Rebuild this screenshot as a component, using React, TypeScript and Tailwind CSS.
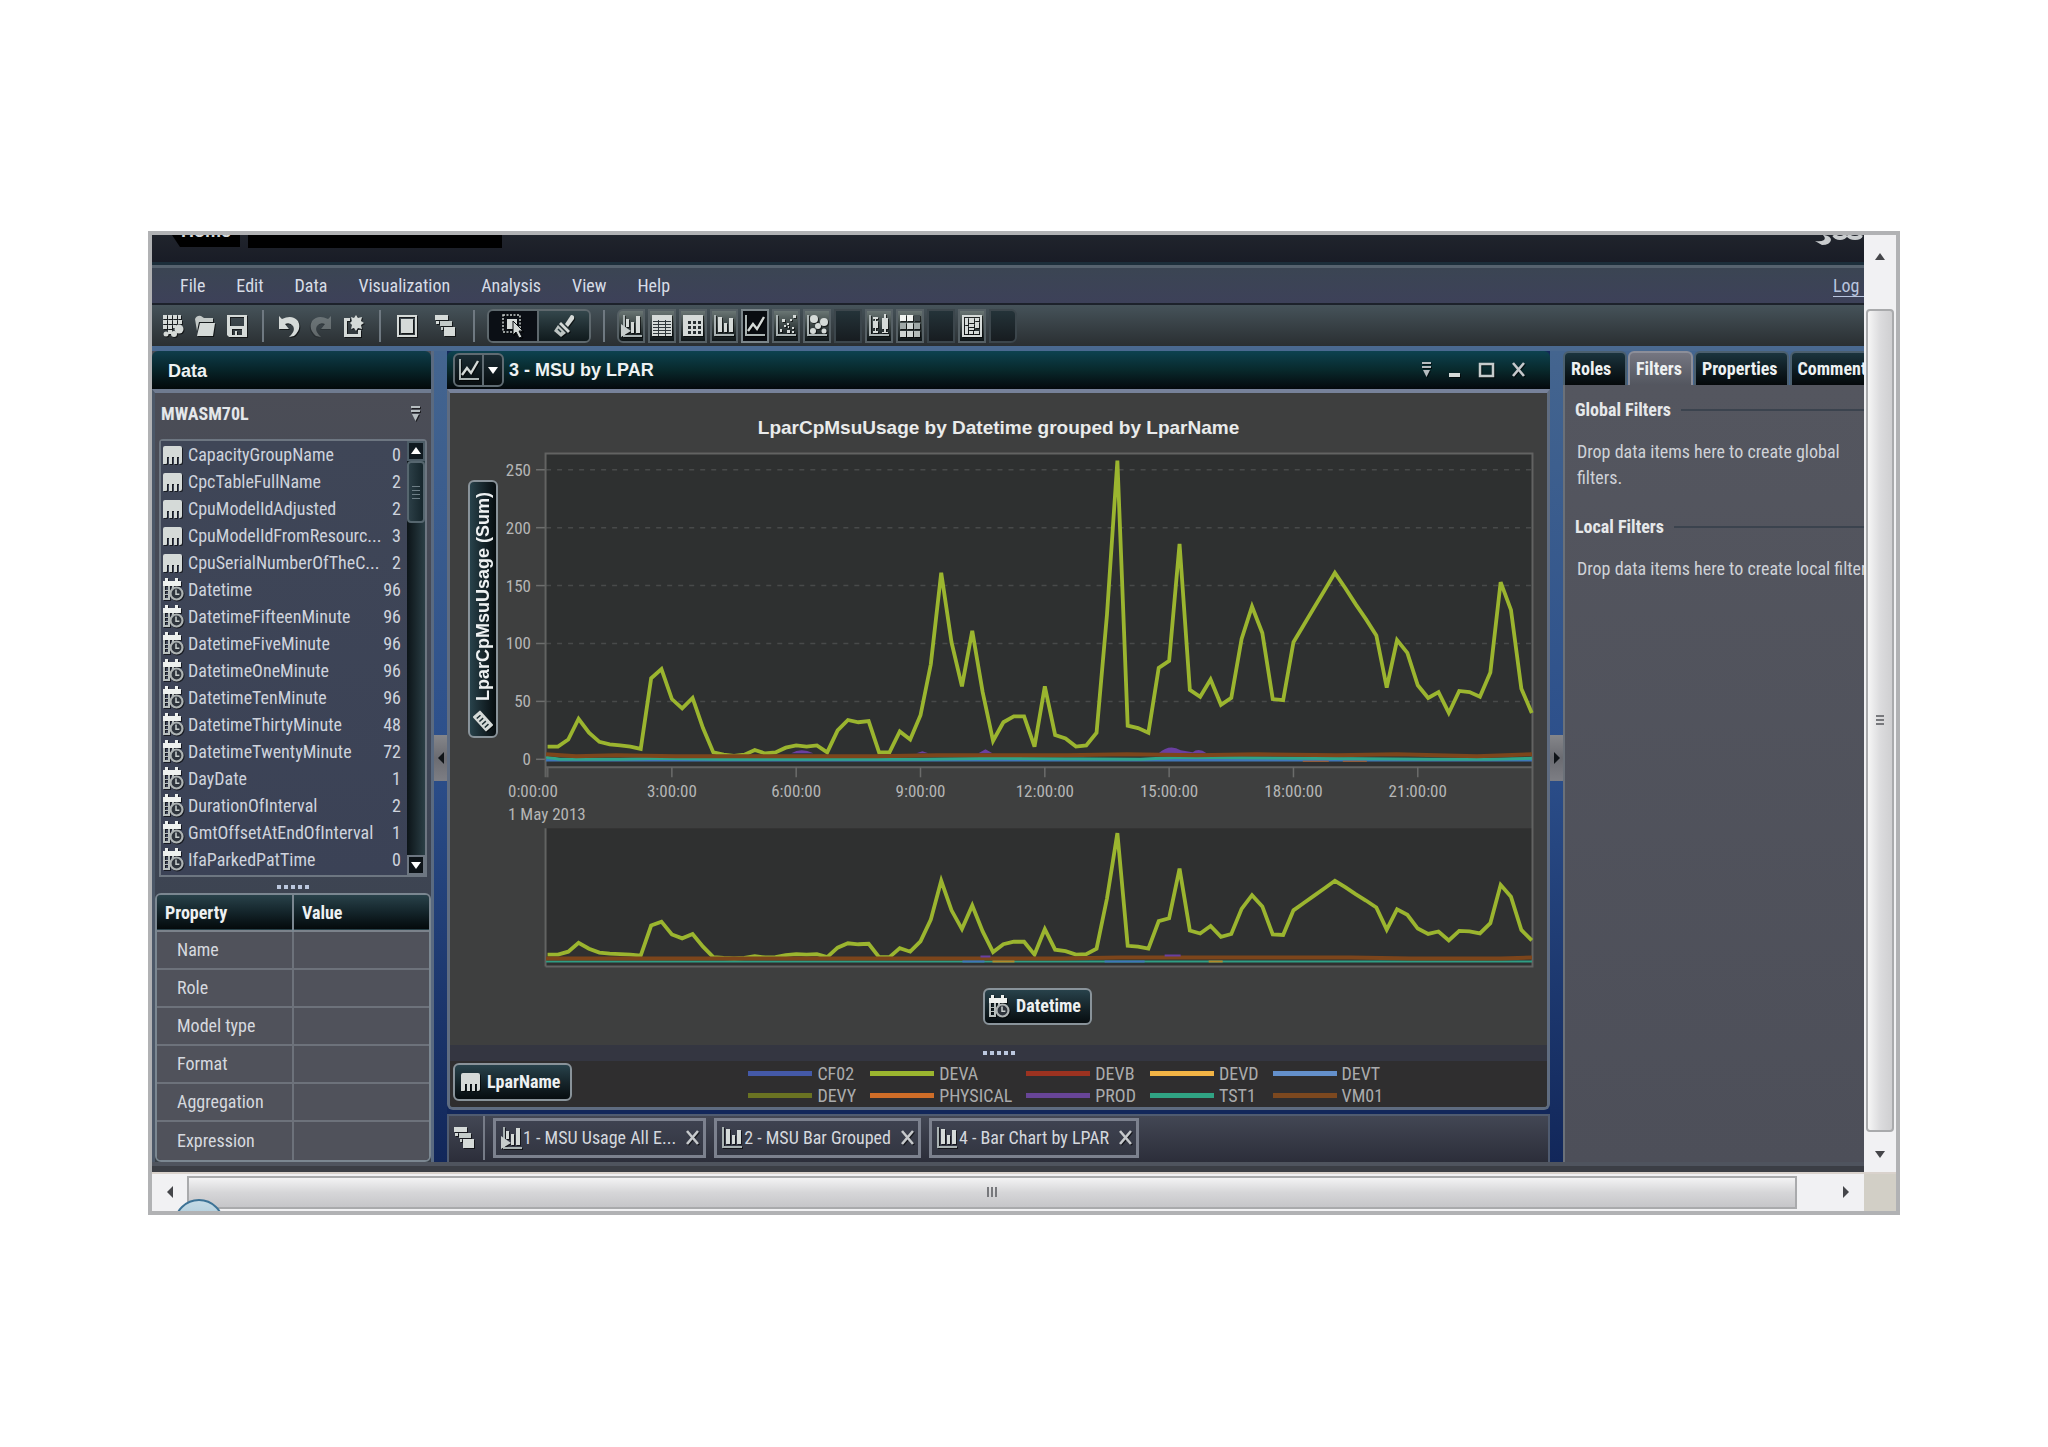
import type { ReactNode } from "react";
import { clsx } from "clsx";

type IconProps = { className?: string };
type DataItem = { name: string; count: number; kind: "category" | "datetime" };

const DATA_ITEMS: DataItem[] = [
    { name: "CapacityGroupName", count: 0, kind: "category" },
    { name: "CpcTableFullName", count: 2, kind: "category" },
    { name: "CpuModelIdAdjusted", count: 2, kind: "category" },
    { name: "CpuModelIdFromResourc...", count: 3, kind: "category" },
    { name: "CpuSerialNumberOfTheC...", count: 2, kind: "category" },
    { name: "Datetime", count: 96, kind: "datetime" },
    { name: "DatetimeFifteenMinute", count: 96, kind: "datetime" },
    { name: "DatetimeFiveMinute", count: 96, kind: "datetime" },
    { name: "DatetimeOneMinute", count: 96, kind: "datetime" },
    { name: "DatetimeTenMinute", count: 96, kind: "datetime" },
    { name: "DatetimeThirtyMinute", count: 48, kind: "datetime" },
    { name: "DatetimeTwentyMinute", count: 72, kind: "datetime" },
    { name: "DayDate", count: 1, kind: "datetime" },
    { name: "DurationOfInterval", count: 2, kind: "datetime" },
    { name: "GmtOffsetAtEndOfInterval", count: 1, kind: "datetime" },
    { name: "IfaParkedPatTime", count: 0, kind: "datetime" },
];

const MENU = ["File", "Edit", "Data", "Visualization", "Analysis", "View", "Help"];
const PROPERTIES = ["Name", "Role", "Model type", "Format", "Aggregation", "Expression"];

const LEGEND = [
    { name: "CF02", color: "bg-[#4459a8]" },
    { name: "DEVA", color: "bg-[#9bb52f]" },
    { name: "DEVB", color: "bg-[#9c3220]" },
    { name: "DEVD", color: "bg-[#f3b445]" },
    { name: "DEVT", color: "bg-[#6490cb]" },
    { name: "DEVY", color: "bg-[#6a7322]" },
    { name: "PHYSICAL", color: "bg-[#cf6d28]" },
    { name: "PROD", color: "bg-[#684597]" },
    { name: "TST1", color: "bg-[#30a383]" },
    { name: "VM01", color: "bg-[#7c481f]" },
];

// MSU usage for DEVA, one value every 15 minutes
const DEVA = [
    11, 11, 17, 35, 23, 15, 13, 12, 11, 9, 70, 78, 52, 44, 53, 27,
    6, 4, 3, 4, 8, 5, 6, 10, 12, 11, 12, 6, 25, 34, 32, 33,
    6, 6, 24, 17, 38, 82, 161, 101, 63, 111, 58, 16, 32, 37, 37, 11,
    63, 21, 18, 11, 12, 23, 125, 258, 29, 27, 23, 79, 85, 186, 60, 54,
    69, 47, 53, 104, 132, 109, 52, 51, 101, 116, 131, 146, 161, 148, 134, 121,
    107, 62, 103, 92, 64, 53, 58, 40, 59, 58, 54, 75, 153, 129, 61, 40,
];

const xAt = (i: number) => 47.5 + 10.35 * i;
const yMain = (v: number) => 314 - 1.157 * v;
const yOverview = (v: number) => 514.5 - 0.491 * v;
const toPoints = (values: number[], y: (v: number) => number) =>
    values.map((v, i) => `${xAt(i).toFixed(1)},${y(v).toFixed(1)}`).join(" ");

const NARROW = "font-['Roboto_Condensed','Liberation_Sans',sans-serif]";
const WIDE = "font-['Liberation_Sans',Arial,sans-serif]";

/* ---------- icons ---------- */

function Icon({ children, className, w = 22, h = 24 }: IconProps & { children: ReactNode; w?: number; h?: number }) {
    return (
        <svg
            width={w}
            height={h}
            viewBox={`0 0 ${w} ${h}`}
            fill="#d5dad8"
            stroke="none"
            aria-hidden="true"
            className={clsx("shrink-0 drop-shadow-[1px_1px_0_rgba(0,0,0,0.6)]", className)}
        >
            {children}
        </svg>
    );
}

const Axes = () => <path d="M1 1h2v19h18v2H1z" fill="#aab3b3" />;

const CategoryIcon = ({ className }: IconProps) => (
    <Icon className={className} w={20} h={20}>
        <path d="M2 1h15q2 0 2 2v14q0 2-2 2h-1v-7h-2v7h-3v-7H9v7H6v-7H4v6q0 1-1 1H0V3q0-2 2-2z" />
    </Icon>
);

const DatetimeIcon = ({ className }: IconProps) => (
    <Icon className={className} w={21} h={23}>
        <path d="M0 3h2V0h3v3h7V0h3v3h3v5H0z" fill="#eef1ef" />
        <path d="M0 8h2v14H0zM2 12h5v1H2zM2 16h4v1H2zM2 20h5v2H2zM5 8h2v14H5zM9 8h2v2H9z" fill="#b9c0bf" />
        <circle cx="13.5" cy="15.5" r="6" fill="#2e343c" stroke="#aeb4b4" strokeWidth="2.2" />
        <path d="M13 11.5v4.7h3.4" fill="none" stroke="#c9cfce" strokeWidth="1.5" />
    </Icon>
);

const MeasureIcon = () => (
    <Icon w={20} h={22}>
        <g transform="rotate(48 10 11)">
            <rect x="0" y="6" width="20" height="10" rx="1" />
            <path d="M4 9v5M8 9v5M12 9v5M16 9v5" stroke="#1a2b30" strokeWidth="1.5" />
        </g>
    </Icon>
);

const BarsIcon = () => (
    <Icon>
        <Axes />
        <path d="M5 3h4v15H5zM11 9h3v9h-3zM16 4h4v14h-4z" />
    </Icon>
);

const AutoChartIcon = () => (
    <Icon>
        <path d="M3 1h2v20h17v2H3z" fill="#aab3b3" />
        <path d="M6 5h3v8H6zM11 8h3v11h-3zM16 2h4v17h-4z" />
        <path d="M1 10l10 7-10 6z" fill="#c6cccb" />
    </Icon>
);

const LineIcon = () => (
    <Icon>
        <Axes />
        <path d="M4 17l5-7 4 5 7-12" fill="none" stroke="#d5dad8" strokeWidth="2.4" />
    </Icon>
);

const TableIcon = () => (
    <Icon>
        <path d="M1 1h20v21H1z" />
        <path d="M2 7.5h18M2 10.5h18M2 13.5h18M2 16.5h18M2 19.5h18M7.5 6v16M14.5 6v16" stroke="#30383b" />
    </Icon>
);

const CrosstabIcon = () => (
    <Icon>
        <path d="M1 1h20v21H1z" />
        <path d="M6 7h3v3H6zM11 7h3v3h-3zM16 7h3v3h-3zM6 12h3v3H6zM11 12h3v3h-3zM16 12h3v3h-3zM6 17h3v3H6zM11 17h3v3h-3zM16 17h3v3h-3z" fill="#272e31" />
    </Icon>
);

const ScatterIcon = () => (
    <Icon>
        <Axes />
        <path d="M7 5h3v3H7zM12 9h2v2h-2zM18 1h3v3h-3zM15 5h2v2h-2zM9 11h2v2H9zM5 15h2v3H5zM12 16h3v3h-3zM17 13h2v2h-2zM17 17h2v2h-2zM13 12h1v2h-1z" />
    </Icon>
);

const BubbleIcon = () => (
    <Icon>
        <Axes />
        <circle cx="8" cy="5" r="4" />
        <circle cx="18" cy="8" r="4" />
        <circle cx="12" cy="12" r="3" />
        <circle cx="7" cy="17" r="3" />
        <circle cx="18" cy="17" r="2.5" />
    </Icon>
);

const BoxPlotIcon = () => (
    <Icon>
        <Axes />
        <path d="M5 7h5v7H5zM14 4h6v11h-6zM7 3h1v16H7zM16 0h2v19h-2zM5 3h5v2H5zM5 17h5v2H5zM14 18h6v1h-6z" />
    </Icon>
);

const HeatIcon = () => (
    <Icon>
        <path d="M1 1h6v6H1zM8 1h6v6H8z" fill="#f0f3f1" />
        <path d="M15 1h6v6h-6z" fill="#454f52" />
        <path d="M1 9h6v6H1zM15 9h6v6h-6z" fill="#9fa8a7" />
        <path d="M8 9h6v6H8zM1 17h6v6H1zM8 17h6v6H8z" fill="#cfd5d3" />
        <path d="M15 17h6v6h-6z" fill="#b4bcba" />
    </Icon>
);

const TreemapIcon = () => (
    <Icon>
        <path d="M1 1h20v22H1zM3 3v18h16V3z" fillRule="evenodd" />
        <path d="M4 4h3v7H4zM8 4h5v5H8zM14 4h4v3h-4zM14 8h4v6h-4zM8 10h5v3H8zM4 12h3v8H4zM8 14h5v2H8zM8 17h4v3H8zM13 17h5v3h-5z" />
    </Icon>
);

const NewDataIcon = () => (
    <Icon>
        <path d="M1 1h4v4H1zM6 1h4v4H6zM11 1h4v4h-4zM16 1h3v4h-3zM1 6h4v4H1zM6 6h4v4H6zM11 6h4v4h-4zM16 6h4v4h-4zM1 11h4v4H1zM6 11h4v4H6zM11 11h3v3h-3zM6 16h4v4H6z" />
        <circle cx="17" cy="15" r="4.5" />
        <circle cx="12" cy="20" r="3" />
        <circle cx="4" cy="20" r="2.5" />
    </Icon>
);

const OpenIcon = () => (
    <Icon>
        <path d="M1 5q2-4 6-3l3 2h9v4H5L3 17z" fill="#c3c9c7" />
        <path d="M6 9h15l-2 13H3z" />
    </Icon>
);

const SaveIcon = () => (
    <Icon>
        <path d="M1 1h20v22H3l-2-2zM4 3v9h14V3zM6 15v6h3v-4h2v4h5v-6z" fillRule="evenodd" />
    </Icon>
);

const UndoIcon = ({ className }: IconProps) => (
    <Icon className={className}>
        <path d="M1 2l3 3q10-5 16 2 4 8-4 15l-5 1q7-6 4-11-3-4-8-2l4 5H1z" />
    </Icon>
);

const ExportIcon = () => (
    <Icon>
        <path d="M2 4h6v3H5v13h11v-4h3v7H2z" />
        <path d="M14 1l2 3 4-1-1 4 3 2-3 2 1 4-4-1-2 3-2-3-3 1 1-4-2-2 2-2-1-4 3 1z" />
    </Icon>
);

const MaximizeIcon = () => (
    <Icon>
        <path d="M1 1h20v22H1zM3 3v18h16V3z" fillRule="evenodd" />
        <path d="M5 5h12v14H5z" />
    </Icon>
);

const CascadeIcon = () => (
    <Icon>
        <path d="M1 1h13v5H1zM2 7h3v3H2z" />
        <path d="M6 7h12v5H6zM7 13h2v3H7z" fill="#c3cac8" />
        <path d="M10 13h11v9H10z" />
    </Icon>
);

const SelectIcon = () => (
    <Icon>
        <path d="M1 1h17v17H1z" fill="none" stroke="#c9cfcd" strokeWidth="1.5" strokeDasharray="2 1.5" />
        <path d="M5 5h10v10H5z" />
        <path d="M11 7l10 10h-4l3 6-3 1-3-6-3 3z" stroke="#0a0e12" />
    </Icon>
);

const BrushIcon = () => (
    <Icon>
        <path d="M18 1q4 0 3 4l-6 8-3-3z" />
        <path d="M8 8l9 9-2 2-9-9z" />
        <path d="M5 11l8 8-5 4-7-6z" fill="#bcc3c1" />
        <path d="M5 15l3 3" stroke="#26393c" strokeWidth="1.5" />
    </Icon>
);

const OptionsIcon = () => (
    <Icon w={10} h={16}>
        <path d="M0 0h9v2H0zM0 4h9v2H0zM1 8h7l-3.500 7z" fill="#b6bdc0" />
    </Icon>
);

const CloseIcon = () => (
    <Icon w={14} h={16}>
        <path d="M1 1l11 13M12 1L1 14" stroke="#c6c9cc" strokeWidth="2.6" />
    </Icon>
);

/* ---------- small parts ---------- */

function Triangle({ dir, className }: { dir: "up" | "down" | "left" | "right"; className?: string }) {
    const d = {
        up: "M6 2l5 7H1z",
        down: "M1 3h10l-5 7z",
        left: "M9 0v12L3 6z",
        right: "M3 0v12l6-6z",
    }[dir];
    return (
        <svg width="12" height="12" viewBox="0 0 12 12" fill="currentColor" aria-hidden="true" className={className}>
            <path d={d} />
        </svg>
    );
}

const Dots = () => (
    <div className="flex justify-center gap-[3px]">
        {[0, 1, 2, 3, 4].map(i => <span key={i} className="size-1 bg-[#bcc8de]" />)}
    </div>
);

const Separator = () => <span className="block h-8 w-0.5 shrink-0 bg-[#6f7981]" />;

function ToolButton({ label, children }: { label: string; children: ReactNode }) {
    return <button aria-label={label} className="flex w-8 justify-center">{children}</button>;
}

function Splitter({ dir }: { dir: "left" | "right" }) {
    return (
        <div className="flex w-[13px] shrink-0 items-start bg-linear-to-b from-[#44658f] via-[#2c4f8b] to-[#12275a] pt-[384px]">
            <button
                aria-label={`Collapse ${dir} panel`}
                className="flex h-[46px] w-full items-center justify-center bg-linear-to-b from-[#85868a] via-[#6b6c72] to-[#7d7e84] text-[#101418]"
            >
                <Triangle dir={dir} />
            </button>
        </div>
    );
}

/* ---------- areas ---------- */

function TopBar() {
    return (
        <div className="flex h-[27px] items-start overflow-hidden bg-linear-to-b from-[#20242c] to-[#191c26]">
            <div className={clsx(WIDE, "ml-5 flex h-3 w-[68px] items-end justify-center bg-black pb-[6px] text-lg/5 font-bold text-[#d8dcde] [clip-path:polygon(0_0,100%_0,100%_100%,8px_100%)]")}>
                Home
            </div>
            <div className="ml-2 h-[13px] w-[254px] bg-black" />
            <div className="ml-auto flex h-3 items-start">
                <svg width="50" height="12" viewBox="0 0 50 12" fill="none" stroke="#c9ccce" aria-label="SAS" role="img">
                    <path d="M10 0q7 1 7 5-1 5-9 5l-7-4q6 1 9-1 2-2-1-5z" fill="#c9ccce" stroke="none" />
                    <path d="M20 0q2 3 6 3t6-3M34 0q2 3 7 3t6-3" strokeWidth="4" />
                </svg>
            </div>
        </div>
    );
}

function MenuBar() {
    return (
        <nav className="flex h-[38px] items-center gap-[31px] overflow-hidden border-t-3 border-[#56626e] bg-linear-to-b from-[#3b4553] to-[#3d4159] pl-7 text-lg text-[#d7dce6]">
            {MENU.map(item => <button key={item}>{item}</button>)}
            <a href="#logoff" className="ml-auto w-[31px] overflow-hidden whitespace-nowrap text-[#b8c4de] underline underline-offset-4">Log Off</a>
        </nav>
    );
}

const CHART_TYPES: { label: string; icon: ReactNode; active?: boolean }[] = [
    { label: "Automatic chart", icon: <AutoChartIcon /> },
    { label: "Table", icon: <TableIcon /> },
    { label: "Crosstab", icon: <CrosstabIcon /> },
    { label: "Bar chart", icon: <BarsIcon /> },
    { label: "Line chart", icon: <LineIcon />, active: true },
    { label: "Scatter plot", icon: <ScatterIcon /> },
    { label: "Bubble plot", icon: <BubbleIcon /> },
    { label: "Histogram", icon: null },
    { label: "Box plot", icon: <BoxPlotIcon /> },
    { label: "Heat map", icon: <HeatIcon /> },
    { label: "Geo map", icon: null },
    { label: "Treemap", icon: <TreemapIcon /> },
    { label: "Correlation matrix", icon: null },
];

function Toolbar() {
    return (
        <div className="flex h-[43px] items-center border-t-2 border-[#1d222b] bg-linear-to-b from-[#46535a] to-[#2a2f32] pl-[5px]">
            <ToolButton label="New"><NewDataIcon /></ToolButton>
            <ToolButton label="Open"><OpenIcon /></ToolButton>
            <ToolButton label="Save"><SaveIcon /></ToolButton>
            <div className="mx-[9px]"><Separator /></div>
            <ToolButton label="Undo"><UndoIcon /></ToolButton>
            <ToolButton label="Redo"><UndoIcon className="-scale-x-100 opacity-30" /></ToolButton>
            <ToolButton label="Export"><ExportIcon /></ToolButton>
            <div className="mx-[10px]"><Separator /></div>
            <div className="flex gap-[6px]">
                <ToolButton label="Maximize"><MaximizeIcon /></ToolButton>
                <ToolButton label="Cascade"><CascadeIcon /></ToolButton>
            </div>
            <div className="mx-3"><Separator /></div>
            <div className="flex h-[34px] overflow-hidden rounded-md border-2 border-[#5e686d]">
                <button aria-label="Select" className="flex w-[50px] items-center justify-center border-r-2 border-[#5e686d] bg-[#0b0f15]"><SelectIcon /></button>
                <button aria-label="Brush" className="flex w-[50px] items-center justify-center bg-linear-to-b from-[#34474c] to-[#101a1d]"><BrushIcon /></button>
            </div>
            <div className="mx-3"><Separator /></div>
            <div className="flex gap-[3px]">
                {CHART_TYPES.map(t => (
                    <button
                        key={t.label}
                        aria-label={t.label}
                        className={clsx(
                            "flex h-[34px] w-7 items-center justify-center border-2 first:rounded-l-md last:rounded-r-md",
                            t.active
                                ? "border-[#7b858a] bg-[#090c11]"
                                : t.icon
                                    ? "border-[#566065] bg-linear-to-b from-[#6a7674] to-[#0f1618]"
                                    : "border-[#3c464c] bg-linear-to-b from-[#243339] to-[#171c20]"
                        )}
                    >
                        {t.icon}
                    </button>
                ))}
            </div>
        </div>
    );
}

function DataPanel() {
    return (
        <aside className="flex w-[282px] shrink-0 flex-col border-r-3 border-[#5a6a80] bg-[#4b4e58]">
            <h2 className={clsx(WIDE, "flex h-[38px] items-center rounded-t-md bg-linear-to-b from-[#0f3d4b] via-[#072429] to-[#03090b] pt-[2px] pl-4 text-lg font-bold text-[#eef2f3]")}>
                Data
            </h2>
            <div className="flex flex-1 flex-col border-t-4 border-l-3 border-[#6f7b90] border-l-[#4c5868] bg-linear-to-b from-[#4b4d56] via-[#3f4656] to-[#394048] px-1">
                <div className="flex h-[46px] items-center justify-between pr-[6px] pb-1 pl-[2px] text-lg font-bold text-[#e4e7ea]">
                    MWASM70L
                    <button aria-label="Data source options"><OptionsIcon /></button>
                </div>
                <div className="flex rounded-t-sm border-2 border-[#6d7681]">
                    <ul className="min-w-0 flex-1 bg-linear-to-b from-[#3f4657] to-[#3b4256] pr-[6px] pb-[2px] pl-[2px] text-lg leading-[27px] text-[#ced3dd]">
                        {DATA_ITEMS.map(item => (
                            <li key={item.name} className="flex items-center">
                                <span className="flex w-[25px] shrink-0">
                                    {item.kind === "category" ? <CategoryIcon /> : <DatetimeIcon />}
                                </span>
                                <span className="flex-1 whitespace-nowrap">{item.name}</span>
                                <span>{item.count}</span>
                            </li>
                        ))}
                    </ul>
                    <div className="flex w-[18px] shrink-0 flex-col bg-linear-to-r from-[#0c1418] to-[#2b3f46]">
                        <button aria-label="Scroll up" className="flex h-5 items-center justify-center border-2 border-[#4d5d67] bg-[#0f1920] text-white"><Triangle dir="up" /></button>
                        <div className="flex h-[62px] flex-col items-center justify-center gap-[3px] rounded-sm border-2 border-[#56666f] bg-linear-to-r from-[#2b3e46] to-[#16262c]">
                            {[0, 1, 2, 3].map(i => <span key={i} className="h-px w-2 bg-[#6e7e86]" />)}
                        </div>
                        <button aria-label="Scroll down" className="mt-auto flex h-5 items-center justify-center border-2 border-[#6d7681] bg-[#0d1318] text-white"><Triangle dir="down" /></button>
                    </div>
                </div>
                <div className="pt-2 pb-1"><Dots /></div>
                <div className="-mx-1 flex flex-1 flex-col overflow-hidden rounded-md border-2 border-[#7b8791]">
                    <table className="w-full flex-1 border-collapse bg-[#50525b] text-left text-lg text-[#d6d9df]">
                        <thead>
                            <tr className="h-[36px] border-b-2 border-[#7b828b] bg-linear-to-b from-[#29424a] via-[#14252b] to-[#050a0c] font-bold text-[#eef1f2]">
                                <th className="w-1/2 border-r-2 border-[#7b8791] pl-2">Property</th>
                                <th className="pl-2">Value</th>
                            </tr>
                        </thead>
                        <tbody>
                            {PROPERTIES.map(p => (
                                <tr key={p} className="h-[38px] border-b-2 border-[#6d727b] last:border-b-0">
                                    <td className="border-r-2 border-[#6d727b] pl-5">{p}</td>
                                    <td />
                                </tr>
                            ))}
                        </tbody>
                    </table>
                </div>
            </div>
        </aside>
    );
}

function Chart() {
    const hours = ["3:00:00", "6:00:00", "9:00:00", "12:00:00", "15:00:00", "18:00:00", "21:00:00"];
    return (
        <svg viewBox="0 0 1046 530" className="min-w-0 flex-1" role="img" aria-label="MSU usage over time">
            <rect x="45" y="8" width="987" height="314" fill="#2e3030" />
            <rect x="45" y="383" width="987" height="138" fill="#2f3030" />
            {[0, 50, 100, 150, 200, 250].map(v => (
                <g key={v}>
                    <line x1="36" x2="46" y1={yMain(v)} y2={yMain(v)} stroke="#6d6e6d" strokeWidth="1.5" />
                    {v > 0 && <line x1="46" x2="1032" y1={yMain(v)} y2={yMain(v)} stroke="#484a4a" strokeWidth="1.5" strokeDasharray="5 6" />}
                    <text x="31" y={yMain(v) + 6} textAnchor="end" fontSize="17" fill="#b5b6b6">{v}</text>
                </g>
            ))}
            <path d="M45.5 521V383M45.5 332V8.5H1031.5V521H45.5M45.5 322H1032" fill="none" stroke="#626362" strokeWidth="2" />
            <path d="M47.5 322v10" stroke="#626362" strokeWidth="2" />
            {hours.map((t, i) => {
                const x = xAt(12 * (i + 1));
                return (
                    <g key={t}>
                        <line x1={x} x2={x} y1="322" y2="332" stroke="#6b6c6b" strokeWidth="1.5" />
                        <text x={x} y="352" textAnchor="middle" fontSize="17" fill="#b5b6b6">{t}</text>
                    </g>
                );
            })}
            <text x="8" y="352" fontSize="17" fill="#b5b6b6">0:00:00</text>
            <text x="8" y="375" fontSize="17" fill="#b5b6b6">1 May 2013</text>

            <polyline points={toPoints(DEVA, yMain)} fill="none" stroke="#9bb52f" strokeWidth="3.8" />
            <path d="M291 308q10-6 22 0zM416 308h12l-6-2zM478 308h14l-7-4zM658 308q11-10 22-3l12 2q6-5 14 1z" fill="#6a3fa0" />
            <path d="M46 315H1031" stroke="#3f76b8" strokeWidth="2.5" />
            <path d="M46 312L60 314H120L160 313 220 314H420L500 313 640 314 680 312 800 313 930 314H990L1031 313" fill="none" stroke="#2fa389" strokeWidth="3" />
            <path d="M46 309L76 311 116 310 176 311H376L436 310H566L626 309 696 310 756 309 836 310 896 309 976 311 1031 309" fill="none" stroke="#7c451b" strokeWidth="4" />
            <path d="M802 316h26M842 316h24" stroke="#b0602a" />

            <polyline points={toPoints(DEVA, yOverview)} fill="none" stroke="#9bb52f" strokeWidth="3.8" />
            <path d="M46 516H1031" stroke="#2f9d84" strokeWidth="2" />
            <path d="M46 513H560L620 512H850L910 513H1000L1031 512" fill="none" stroke="#7c451b" strokeWidth="4" />
            <path d="M492 516h22M708 516h14" stroke="#b08a2a" strokeWidth="2" />
            <path d="M462 516h22M604 516h40" stroke="#3f76b8" strokeWidth="2" />
            <path d="M664 510h16M480 511h10" stroke="#6a3fa0" strokeWidth="2" />
        </svg>
    );
}

const CHIP = "flex items-center rounded-md border-2 border-[#89939a] bg-linear-to-b from-[#28424b] to-[#070d10] font-bold text-[#eef1f2]";

function ChartWindow() {
    return (
        <section className="flex flex-col">
            <header className="flex h-[38px] items-center rounded-t-md bg-linear-to-b from-[#0d4250] via-[#08292c] to-[#04090d] pr-6 pl-[6px]">
                <button aria-label="Chart type" className="flex h-[34px] items-center rounded-md border-2 border-[#5f6b72] bg-linear-to-b from-[#1b2c33] to-[#070d10]">
                    <span className="flex h-full w-[29px] items-center justify-center border-r-2 border-[#5f6b72]"><LineIcon /></span>
                    <span className="flex w-[18px] justify-center text-white"><Triangle dir="down" /></span>
                </button>
                <h2 className={clsx(WIDE, "ml-[5px] text-lg font-bold text-[#eef2f3]")}>3 - MSU by LPAR</h2>
                <div className="ml-auto flex items-center gap-4">
                    <button aria-label="Options"><OptionsIcon /></button>
                    <button aria-label="Minimize">
                        <Icon w={14} h={16}><path d="M1 11h11v4H1z" /></Icon>
                    </button>
                    <button aria-label="Maximize">
                        <Icon w={18} h={16}><path d="M2 2h13v12H2z" fill="none" stroke="#c6cccc" strokeWidth="2.5" /></Icon>
                    </button>
                    <button aria-label="Close"><CloseIcon /></button>
                </div>
            </header>
            <div className="flex flex-col overflow-hidden rounded-b-md border-3 border-t-4 border-[#5f6c80] border-t-[#77829a] bg-[#3e3f3f]">
                <h3 className={clsx(WIDE, "pt-[22px] pb-1 text-center text-[19px] leading-[26px] font-bold text-[#e9ebeb]")}>
                    LparCpMsuUsage by Datetime grouped by LparName
                </h3>
                <div className="flex items-start gap-[2px] pl-[18px]">
                    <button className={clsx(WIDE, "mt-[35px] flex h-[258px] w-[30px] shrink-0 flex-col items-center justify-between rounded-md border-2 border-[#89939a] bg-linear-to-r from-[#28424b] to-[#070d10] py-1 pt-[10px] text-lg/5 font-bold whitespace-nowrap text-[#eef1f2]")}>
                        <span className="rotate-180 [writing-mode:vertical-rl]">LparCpMsuUsage (Sum)</span>
                        <MeasureIcon />
                    </button>
                    <Chart />
                </div>
                <div className="flex justify-center pt-3 pb-5 pl-[78px]">
                    <button className={clsx(CHIP, "h-[37px] gap-[6px] pr-[9px] pl-1 text-lg")}><DatetimeIcon />Datetime</button>
                </div>
                <div className="bg-[#343641] py-[6px]"><Dots /></div>
                <div className="flex items-start bg-[#2f2e2f] pl-[3px]">
                    <button className={clsx(CHIP, "mt-[2px] mb-[6px] h-[38px] gap-[6px] pr-[10px] pl-[6px] text-lg")}><CategoryIcon />LparName</button>
                    <ul className="mx-auto grid grid-cols-[repeat(5,auto)] gap-x-[14px] pt-[2px] pl-3 text-lg leading-[22px] text-[#aaabac]">
                        {LEGEND.map(s => (
                            <li key={s.name} className="flex items-center gap-[5px]">
                                <span className={clsx("h-[5px] w-16", s.color)} />
                                {s.name}
                            </li>
                        ))}
                    </ul>
                </div>
            </div>
        </section>
    );
}

const OPEN_TABS = [
    { label: "1 - MSU Usage All E...", icon: <AutoChartIcon /> },
    { label: "2 - MSU Bar Grouped", icon: <BarsIcon /> },
    { label: "4 - Bar Chart by LPAR", icon: <BarsIcon /> },
];

function WindowTabs() {
    return (
        <div className="mt-1 flex flex-1 items-center gap-2 border-2 border-b-0 border-[#4f5b70] bg-linear-to-b from-[#434754] to-[#2c2e3a] pb-[2px] pl-1">
            <button aria-label="Cascade windows"><CascadeIcon /></button>
            <span className="h-11 w-0.5 bg-[#767b87]" />
            {OPEN_TABS.map(t => (
                <div key={t.label} className="flex h-10 items-center border-3 border-[#7c818e] bg-linear-to-b from-[#3e4250] to-[#333642] pr-[3px] pl-1 text-lg text-[#d5d8de]">
                    {t.icon}
                    <button className="pr-[10px] pl-px whitespace-nowrap">{t.label}</button>
                    <button aria-label={`Close ${t.label}`}><CloseIcon /></button>
                </div>
            ))}
        </div>
    );
}

function FilterHeading({ children }: { children: ReactNode }) {
    return (
        <h3 className="flex items-center gap-[10px] text-lg leading-[26px] font-bold whitespace-nowrap text-[#e6e8ea]">
            {children}
            <span className="h-0.5 flex-1 bg-[#3b434e]" />
        </h3>
    );
}

function RightPanel() {
    return (
        <aside className="flex w-[301px] shrink-0 flex-col overflow-hidden">
            <div className="flex h-[34px] gap-px bg-[#44658f] text-lg font-bold text-[#eef1f2]">
                {["Roles", "Filters", "Properties", "Comments"].map(t => (
                    <button
                        key={t}
                        className={clsx(
                            "min-w-16 shrink-0 rounded-t-md border-2 border-b-0 pr-[9px] pl-[6px] text-left",
                            t === "Filters"
                                ? "border-[#8c8e99] bg-linear-to-b from-[#757681] to-[#53565f]"
                                : "border-[#4b5f6e] bg-linear-to-b from-[#1b343e] to-[#05090b]"
                        )}
                    >
                        {t}
                    </button>
                ))}
            </div>
            <div className="flex-1 border-l-2 border-[#6b7179] bg-linear-to-b from-[#54565f] to-[#4d4f59] pt-3 pl-[10px] text-lg leading-[26px] text-[#cfd2d8]">
                <FilterHeading>Global Filters</FilterHeading>
                <p className="py-4 pl-[2px]">Drop data items here to create global filters.</p>
                <div className="h-[7px]" />
                <FilterHeading>Local Filters</FilterHeading>
                <p className="pt-4 pl-[2px] whitespace-nowrap">Drop data items here to create local filters.</p>
            </div>
        </aside>
    );
}

function VerticalScrollbar() {
    return (
        <div className="flex w-8 shrink-0 flex-col items-center bg-[#f1f1f3] text-[#45464a]">
            <button aria-label="Scroll page up" className="pt-4"><Triangle dir="up" /></button>
            <div className="mt-[46px] flex w-7 flex-1 flex-col items-center justify-center gap-[2px] rounded-sm border-2 border-[#a9aaac] bg-linear-to-r from-[#f6f6f6] via-[#dcdcde] to-[#cfcfd1]">
                {[0, 1, 2].map(i => <span key={i} className="h-0.5 w-2 bg-[#77787c]" />)}
            </div>
            <button aria-label="Scroll page down" className="pt-4 pb-3"><Triangle dir="down" /></button>
        </div>
    );
}

function HorizontalScrollbar() {
    return (
        <div className="relative flex h-[39px] overflow-hidden border-t-2 border-[#d9d2cc] bg-[#f1f1f3] text-[#45464a]">
            <button aria-label="Scroll page left" className="flex w-[35px] items-center justify-center"><Triangle dir="left" /></button>
            <div className="my-[2px] flex flex-1 items-center justify-center gap-[2px] border-2 border-[#a9aaac] bg-linear-to-b from-[#f3f3f4] via-[#d6d6d8] to-[#c6c6c9]">
                {[0, 1, 2].map(i => <span key={i} className="h-[10px] w-0.5 bg-[#77787c]" />)}
            </div>
            <button aria-label="Scroll page right" className="flex w-[67px] items-center justify-end pr-3"><Triangle dir="right" /></button>
            <div className="w-8 bg-[#d2cfc6]" />
            <div className="absolute -bottom-[38px] left-[22px] size-[50px] rounded-full border-2 border-[#3d7396] bg-linear-to-b from-[#c5dbe6] to-[#8fb4c8]" />
        </div>
    );
}

export default function App() {
    return (
        <main className={clsx(NARROW, "min-h-screen bg-white px-37 pt-[231px]")}>
            <div className="border-4 border-[#b1b2b4]">
                <div className="flex">
                    <div className="flex min-w-0 flex-1 flex-col">
                        <TopBar />
                        <div className="h-[3px] bg-[#1c2e3a]" />
                        <MenuBar />
                        <Toolbar />
                        <div className="h-[5px] bg-[#4a6990]" />
                        <div className="flex">
                            <DataPanel />
                            <Splitter dir="left" />
                            <div className="flex min-w-0 flex-1 flex-col bg-[#12275a]">
                                <ChartWindow />
                                <WindowTabs />
                            </div>
                            <Splitter dir="right" />
                            <RightPanel />
                        </div>
                        <div className="h-[10px] border-t-4 border-[#4f545e] bg-[#3b3e45]" />
                    </div>
                    <VerticalScrollbar />
                </div>
                <HorizontalScrollbar />
            </div>
        </main>
    );
}
